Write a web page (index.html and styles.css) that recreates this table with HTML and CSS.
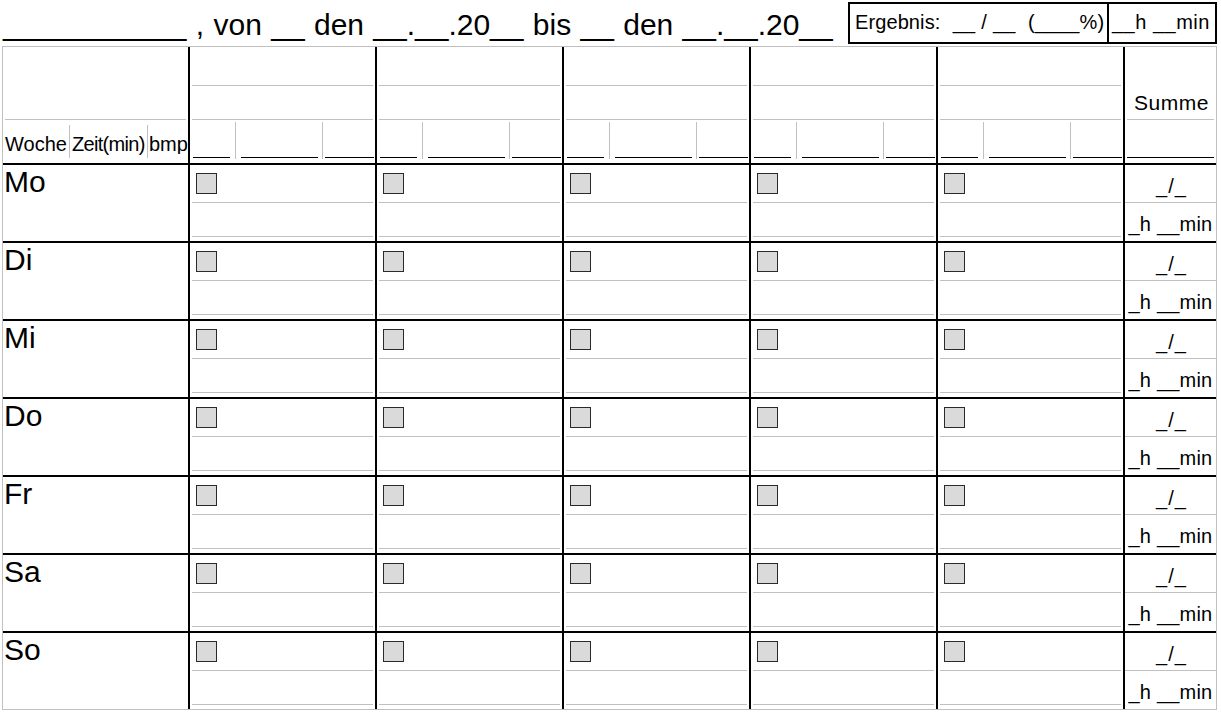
FILE: index.html
```html
<!DOCTYPE html>
<html lang="de">
<head>
<meta charset="utf-8">
<title>Trainingsplan</title>
<link rel="stylesheet" href="styles.css">
</head>
<body>
<div class="page">
  <div class="top">
    <div class="title">___________ , von __ den __.__.20__ bis __ den __.__.20__</div>
    <div class="result">
      <div class="res-a">Ergebnis:&nbsp; __ / __ &nbsp;(____%)</div>
      <div class="res-sep"></div>
      <div class="res-b">__h __min</div>
    </div>
  </div>

  <div class="sheet">
    <!-- header row -->
    <div class="hleft">
      <div class="hl-top"></div>
      <div class="hl-bot">
        <span class="lab lab1">Woche</span><span class="vsep"></span><span class="lab lab2">Zeit(min)</span><span class="vsep"></span><span class="lab lab3">bmp</span>
      </div>
    </div>
    <div class="hex"><div class="h1"></div><div class="h2"></div><div class="h3"><div class="sc sc1"></div><span class="sep"></span><div class="sc sc2"></div><span class="sep"></span><div class="sc sc3"></div></div></div>
    <div class="hex"><div class="h1"></div><div class="h2"></div><div class="h3"><div class="sc sc1"></div><span class="sep"></span><div class="sc sc2"></div><span class="sep"></span><div class="sc sc3"></div></div></div>
    <div class="hex"><div class="h1"></div><div class="h2"></div><div class="h3"><div class="sc sc1"></div><span class="sep"></span><div class="sc sc2"></div><span class="sep"></span><div class="sc sc3"></div></div></div>
    <div class="hex"><div class="h1"></div><div class="h2"></div><div class="h3"><div class="sc sc1"></div><span class="sep"></span><div class="sc sc2"></div><span class="sep"></span><div class="sc sc3"></div></div></div>
    <div class="hex"><div class="h1"></div><div class="h2"></div><div class="h3"><div class="sc sc1"></div><span class="sep"></span><div class="sc sc2"></div><span class="sep"></span><div class="sc sc3"></div></div></div>
    <div class="hsum"><div class="hs-top">Summe</div><div class="hs-bot"></div></div>

    <!-- Mo -->
    <div class="day">Mo</div>
    <div class="cell"><div class="c-top"><span class="box"></span></div><div class="c-mid"></div></div>
    <div class="cell"><div class="c-top"><span class="box"></span></div><div class="c-mid"></div></div>
    <div class="cell"><div class="c-top"><span class="box"></span></div><div class="c-mid"></div></div>
    <div class="cell"><div class="c-top"><span class="box"></span></div><div class="c-mid"></div></div>
    <div class="cell"><div class="c-top"><span class="box"></span></div><div class="c-mid"></div></div>
    <div class="sum"><div class="s-top">_/_</div><div class="s-bot">_h __min</div></div>

    <!-- Di -->
    <div class="day">Di</div>
    <div class="cell"><div class="c-top"><span class="box"></span></div><div class="c-mid"></div></div>
    <div class="cell"><div class="c-top"><span class="box"></span></div><div class="c-mid"></div></div>
    <div class="cell"><div class="c-top"><span class="box"></span></div><div class="c-mid"></div></div>
    <div class="cell"><div class="c-top"><span class="box"></span></div><div class="c-mid"></div></div>
    <div class="cell"><div class="c-top"><span class="box"></span></div><div class="c-mid"></div></div>
    <div class="sum"><div class="s-top">_/_</div><div class="s-bot">_h __min</div></div>

    <!-- Mi -->
    <div class="day">Mi</div>
    <div class="cell"><div class="c-top"><span class="box"></span></div><div class="c-mid"></div></div>
    <div class="cell"><div class="c-top"><span class="box"></span></div><div class="c-mid"></div></div>
    <div class="cell"><div class="c-top"><span class="box"></span></div><div class="c-mid"></div></div>
    <div class="cell"><div class="c-top"><span class="box"></span></div><div class="c-mid"></div></div>
    <div class="cell"><div class="c-top"><span class="box"></span></div><div class="c-mid"></div></div>
    <div class="sum"><div class="s-top">_/_</div><div class="s-bot">_h __min</div></div>

    <!-- Do -->
    <div class="day">Do</div>
    <div class="cell"><div class="c-top"><span class="box"></span></div><div class="c-mid"></div></div>
    <div class="cell"><div class="c-top"><span class="box"></span></div><div class="c-mid"></div></div>
    <div class="cell"><div class="c-top"><span class="box"></span></div><div class="c-mid"></div></div>
    <div class="cell"><div class="c-top"><span class="box"></span></div><div class="c-mid"></div></div>
    <div class="cell"><div class="c-top"><span class="box"></span></div><div class="c-mid"></div></div>
    <div class="sum"><div class="s-top">_/_</div><div class="s-bot">_h __min</div></div>

    <!-- Fr -->
    <div class="day">Fr</div>
    <div class="cell"><div class="c-top"><span class="box"></span></div><div class="c-mid"></div></div>
    <div class="cell"><div class="c-top"><span class="box"></span></div><div class="c-mid"></div></div>
    <div class="cell"><div class="c-top"><span class="box"></span></div><div class="c-mid"></div></div>
    <div class="cell"><div class="c-top"><span class="box"></span></div><div class="c-mid"></div></div>
    <div class="cell"><div class="c-top"><span class="box"></span></div><div class="c-mid"></div></div>
    <div class="sum"><div class="s-top">_/_</div><div class="s-bot">_h __min</div></div>

    <!-- Sa -->
    <div class="day">Sa</div>
    <div class="cell"><div class="c-top"><span class="box"></span></div><div class="c-mid"></div></div>
    <div class="cell"><div class="c-top"><span class="box"></span></div><div class="c-mid"></div></div>
    <div class="cell"><div class="c-top"><span class="box"></span></div><div class="c-mid"></div></div>
    <div class="cell"><div class="c-top"><span class="box"></span></div><div class="c-mid"></div></div>
    <div class="cell"><div class="c-top"><span class="box"></span></div><div class="c-mid"></div></div>
    <div class="sum"><div class="s-top">_/_</div><div class="s-bot">_h __min</div></div>

    <!-- So -->
    <div class="day last">So</div>
    <div class="cell last"><div class="c-top"><span class="box"></span></div><div class="c-mid"></div></div>
    <div class="cell last"><div class="c-top"><span class="box"></span></div><div class="c-mid"></div></div>
    <div class="cell last"><div class="c-top"><span class="box"></span></div><div class="c-mid"></div></div>
    <div class="cell last"><div class="c-top"><span class="box"></span></div><div class="c-mid"></div></div>
    <div class="cell last"><div class="c-top"><span class="box"></span></div><div class="c-mid"></div></div>
    <div class="sum last"><div class="s-top">_/_</div><div class="s-bot">_h __min</div></div>
  </div>
</div>
</body>
</html>
```

FILE: styles.css
```css
* {
  box-sizing: border-box;
}

html, body {
  margin: 0;
  padding: 0;
  background: #ffffff;
}

body {
  font-family: "Liberation Sans", Arial, sans-serif;
  color: #000000;
}

.page {
  width: 1221px;
  height: 713px;
  overflow: hidden;
}

/* ---------- top line ---------- */
.top {
  height: 46px;
  display: flex;
  justify-content: space-between;
  align-items: flex-start;
  padding: 0 4px 0 3px;
}

.title {
  font-size: 30px;
  line-height: 30px;
  padding-top: 10px;
  white-space: pre;
  word-spacing: 1px;
}

.result {
  margin-top: 2px;
  width: 369px;
  height: 42px;
  border: 2px solid #000;
  display: flex;
  font-size: 20px;
  line-height: 20px;
}

.res-a {
  width: 257px;
  padding: 8px 0 0 5px;
  white-space: pre;
  letter-spacing: 0.1px;
  word-spacing: 0.5px;
}

.res-sep {
  width: 2px;
  background: #000;
}

.res-b {
  flex: 1;
  padding: 8px 0 0 3px;
  white-space: pre;
  letter-spacing: 0.5px;
}

/* ---------- sheet grid ---------- */
.sheet {
  margin-left: 2px;
  width: 1215px;
  border: 1px solid #c0c0c0;
  display: grid;
  grid-template-columns: repeat(6, 187px) 91px;
  grid-template-rows: 118px repeat(6, 78px) 76px;
}

.hleft, .hex, .day, .cell {
  border-right: 2px solid #000;
}

.hleft, .hex, .hsum, .day, .cell, .sum {
  border-bottom: 2px solid #000;
}

.day.last, .cell.last, .sum.last {
  border-bottom: none;
}

/* header: left cell */
.hl-top {
  height: 73px;
  margin: 0 2px;
  border-bottom: 1px solid #c0c0c0;
}

.hl-bot {
  height: 43px;
  display: flex;
  align-items: flex-start;
  font-size: 20px;
  line-height: 20px;
}

.lab {
  padding-top: 14px;
  white-space: nowrap;
}

.lab1 {
  width: 66px;
  padding-left: 2px;
}

.lab2 {
  width: 77px;
  padding-left: 2px;
  letter-spacing: -0.7px;
}

.lab3 {
  flex: 1;
  padding-left: 1px;
  overflow: hidden;
}

.vsep {
  width: 1px;
  height: 33px;
  margin-top: 5px;
  background: #c0c0c0;
}

/* header: exercise cells */
.h1 {
  height: 39px;
  margin: 0 2px;
  border-bottom: 1px solid #c0c0c0;
}

.h2 {
  height: 34px;
  margin: 0 2px;
  border-bottom: 1px solid #c0c0c0;
}

.h3 {
  height: 43px;
  padding-top: 2px;
  display: flex;
  align-items: flex-start;
}

.sc {
  height: 36px;
  border-bottom: 1px solid #000;
}

.sc1 {
  width: 37px;
  margin: 0 5px 0 3px;
}

.sc2 {
  width: 77px;
  margin: 0 4px 0 5px;
}

.sc3 {
  flex: 1;
  margin: 0 1px 0 2px;
}

.sep {
  width: 1px;
  height: 37px;
  background: #c0c0c0;
}

/* header: sum cell */
.hs-top {
  height: 73px;
  margin: 0 2px;
  border-bottom: 1px solid #c0c0c0;
  padding: 45px 0 0 2px;
  font-size: 21px;
  line-height: 21px;
  letter-spacing: 0.5px;
  text-align: center;
}

.hs-bot {
  height: 38px;
  margin: 0 2px;
  border-bottom: 1px solid #000;
}

/* day rows */
.day {
  font-size: 30px;
  line-height: 30px;
  padding: 2px 0 0 1px;
}

.c-top {
  height: 38px;
  margin: 0 2px;
  border-bottom: 1px solid #c0c0c0;
  padding: 8px 0 0 4px;
}

.box {
  display: block;
  width: 21px;
  height: 21px;
  border: 1px solid #2a2a2a;
  background: #dadada;
}

.c-mid {
  height: 34px;
  margin: 0 2px;
  border-bottom: 1px solid #c0c0c0;
}

.s-top {
  height: 38px;
  border-bottom: 1px solid #c0c0c0;
  padding: 11px 0 0 2px;
  font-size: 20px;
  line-height: 20px;
  letter-spacing: 1px;
  text-align: center;
}

.s-bot {
  padding-top: 11px;
  font-size: 20px;
  line-height: 20px;
  letter-spacing: 0.2px;
  text-align: center;
  white-space: nowrap;
}
```
